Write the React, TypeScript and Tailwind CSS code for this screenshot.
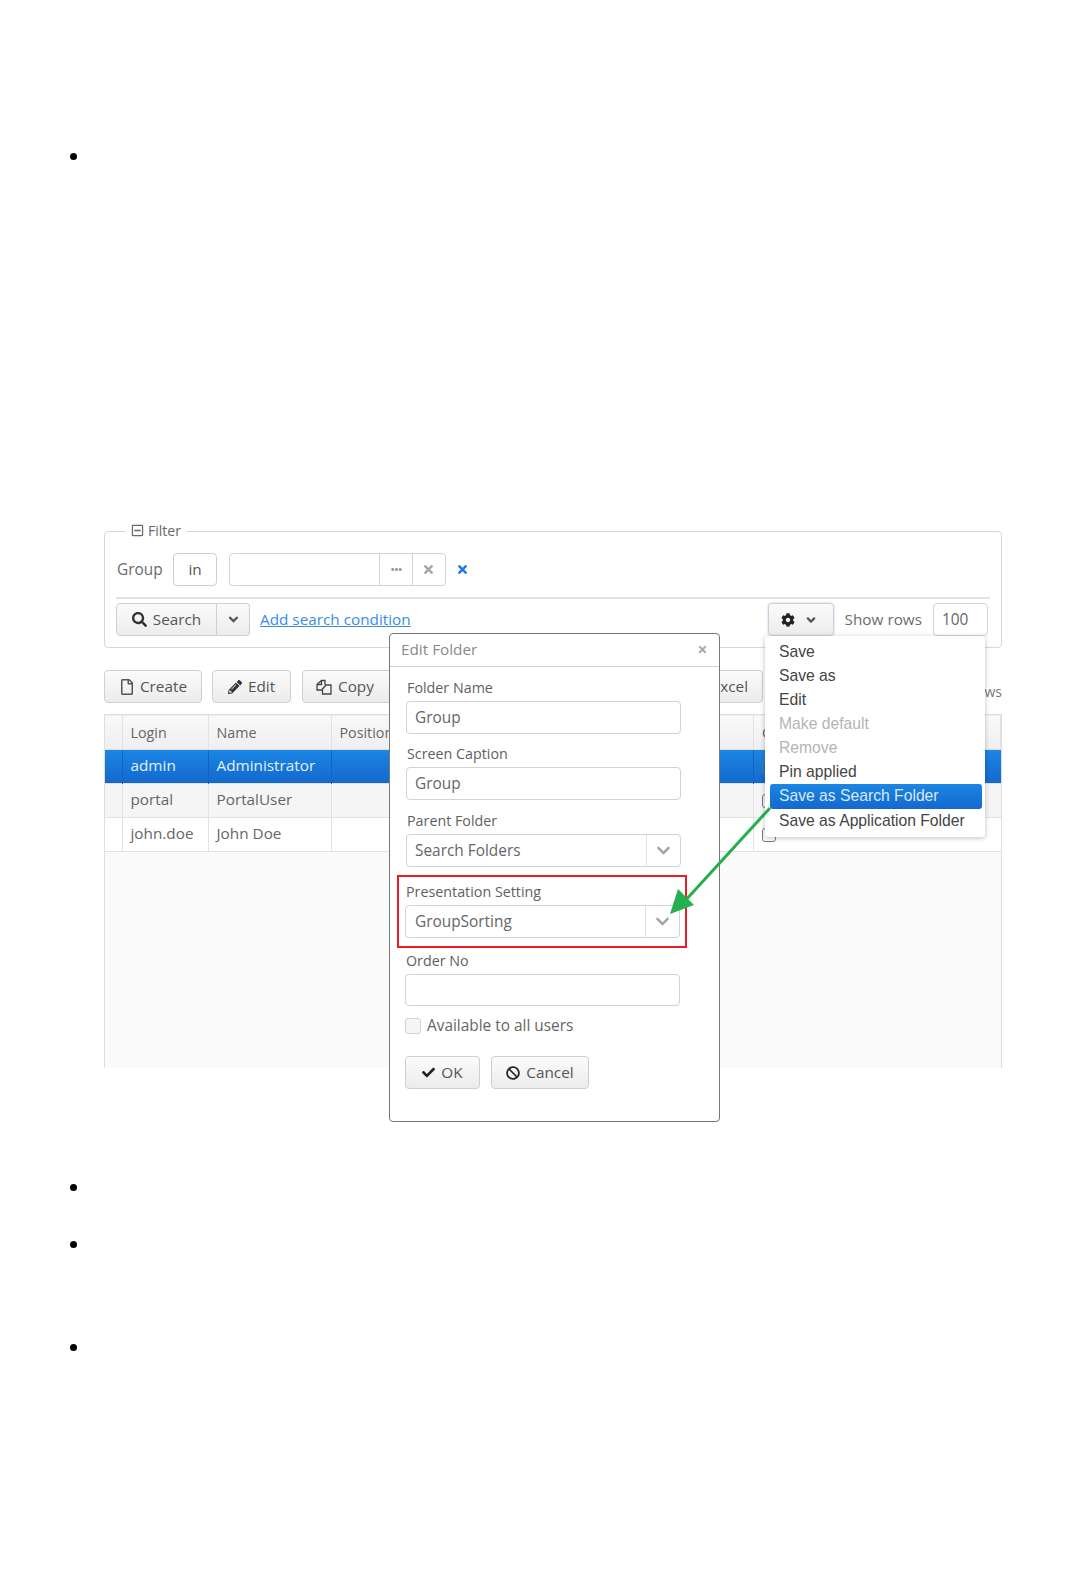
import { FaAngleDown, FaBan, FaCheck, FaChevronDown, FaCog, FaEllipsisH, FaPencilAlt, FaRegFile, FaRegMinusSquare, FaSearch, FaTimes } from "react-icons/fa"
import type { ReactNode } from "react"

const btn =
  "flex h-[33px] items-center justify-center rounded-[4px] border border-[#cfcfcf] bg-gradient-to-b from-[#fbfbfb] to-[#ececec] text-[15.3px] text-[#555]"
const field = "h-[33px] rounded-[4px] border border-[#d2d2d2] bg-white px-[8px] text-[15.4px] leading-[31px] text-[#666]"

function Bullet() {
  return <div className="ml-[70px] h-[7px] w-[7px] rounded-full bg-black" />
}

function Label({ children, className }: { children: ReactNode; className: string }) {
  return <div className={`text-[14.3px] leading-[20px] text-[#5f5f5f] ${className}`}>{children}</div>
}

function SelectField({ value, className }: { value: string; className: string }) {
  return (
    <div className={`${field} flex w-[275px] items-stretch !pr-0 ${className}`}>
      <span className="flex-1">{value}</span>
      <span className="flex w-[34px] items-center justify-center border-l border-[#e2e2e2]">
        <FaChevronDown className="text-[15px] text-[#a3a3a3]" />
      </span>
    </div>
  )
}

function CopyIcon() {
  return (
    <svg width="16" height="16" viewBox="0 0 16 16" fill="none" stroke="#444" strokeWidth="1.3">
      <path d="M6 11H1V5.5L5.5 1.5H9V6" />
      <path d="M1 5.5H5.5V1.5" />
      <path d="M6.5 10L10 6H15V15H6.5Z" />
    </svg>
  )
}

const rows = [
  { login: "admin", name: "Administrator", tr: "bg-gradient-to-b from-[#1b86e3] to-[#1468cf] text-[#e4f0fb]", td: "border-[#1463c2]" },
  { login: "portal", name: "PortalUser", tr: "bg-[#f5f5f5] text-[#666]", td: "border-[#e2e2e2]" },
  { login: "john.doe", name: "John Doe", tr: "bg-white text-[#666]", td: "border-[#e2e2e2]" },
]

const menuItems = [
  { label: "Save", cls: "text-[#444]" },
  { label: "Save as", cls: "text-[#444]" },
  { label: "Edit", cls: "text-[#444]" },
  { label: "Make default", cls: "text-[#b4b4b4]" },
  { label: "Remove", cls: "text-[#b4b4b4]" },
  { label: "Pin applied", cls: "text-[#444]" },
  { label: "Save as Search Folder", cls: "rounded-[3px] bg-gradient-to-b from-[#1b86e3] to-[#1468cf] text-[#d8e9fa]" },
  { label: "Save as Application Folder", cls: "text-[#444]" },
]

export default function App() {
  return (
    <div className="flex min-h-[1569px] flex-col bg-white font-['Open_Sans',sans-serif]">
      <div className="mt-[153px]">
        <Bullet />
      </div>

      {/* Screenshot */}
      <div className="relative mt-[361px] ml-[104px] w-[898px]">
        {/* Filter */}
        <fieldset className="rounded-[4px] border border-[#d8d8d8] px-[11px] pt-[12px] pb-[11px]">
          <legend className="ml-[9px] flex h-[20px] items-center gap-[4px] px-[6px] pb-[2px] text-[14px] text-[#666]">
            <FaRegMinusSquare className="text-[13px]" />
            Filter
          </legend>
          <div className="flex h-[33px] items-center">
            <span className="w-[57px] pl-[1px] text-[15.4px] text-[#6b6b6b]">Group</span>
            <div className={`${btn} w-[44px] !bg-none bg-white pb-[1px]`}>in</div>
            <div className="ml-[12px] flex h-[33px] w-[217px] rounded-[4px] border border-[#d2d2d2]">
              <div className="flex-1" />
              <div className="flex w-[33px] items-center justify-center border-l border-[#d2d2d2]">
                <FaEllipsisH className="text-[11px] text-[#999]" />
              </div>
              <div className="flex w-[33px] items-center justify-center border-l border-[#d2d2d2] pr-[1px]">
                <FaTimes className="text-[13px] text-[#a5a5a5]" />
              </div>
            </div>
            <FaTimes className="ml-[10px] text-[13px] text-[#1a7ae0]" />
          </div>
          <div className="mt-[11px] h-[2px] bg-[#e2e2e2]" />
          <div className="mt-[4px] flex h-[33px] items-center">
            <div className={`${btn} w-[101px] gap-[6px] rounded-r-none`}>
              <FaSearch className="text-[15px] text-[#333]" />
              Search
            </div>
            <div className={`${btn} w-[33px] rounded-l-none border-l-0`}>
              <FaAngleDown className="text-[15px]" />
            </div>
            <span className="ml-[10px] text-[15.3px] text-[#3a8ce6] underline">Add search condition</span>
            <div className={`${btn} ml-auto w-[66px] gap-[9px] border-[#5b9fe0] pr-[2px] shadow-[0_0_2px_#9cc6ef]`}>
              <FaCog className="text-[14px] text-[#222]" />
              <FaAngleDown className="text-[14px]" />
            </div>
            <span className="ml-[11px] text-[15.3px] text-[#6b6b6b]">Show rows</span>
            <div className={`${field} ml-[11px] mr-[2px] w-[55px]`}>100</div>
          </div>
        </fieldset>

        {/* Toolbar */}
        <div className="mt-[22px] flex h-[33px] items-center">
          <div className={`${btn} w-[98px] gap-[5px]`}>
            <FaRegFile className="text-[16px]" />
            Create
          </div>
          <div className={`${btn} ml-[10px] w-[79px] gap-[6px]`}>
            <FaPencilAlt className="text-[14px] text-[#333]" />
            Edit
          </div>
          <div className={`${btn} ml-[11px] w-[94px] justify-start gap-[6px] pl-[13px]`}>
            <CopyIcon />
            Copy
          </div>
          <div className={`${btn} ml-auto mr-[239px] w-[90px] justify-end pr-[14px]`}>Excel</div>
          <span className="absolute right-0 top-[160px] text-[14px] text-[#777]">rows</span>
        </div>

        {/* Table */}
        <div className="mt-[11px] h-[354px] border-x border-[#dedede] bg-[#fafafa]">
          <table className="w-full table-fixed border-collapse text-[15.3px]">
            <colgroup>
              <col className="w-[17px]" />
              <col className="w-[86px]" />
              <col className="w-[123px]" />
              <col />
              <col className="w-[90px]" />
              <col className="w-[247px]" />
            </colgroup>
            <thead>
              <tr className="h-[35px] border-y border-[#dedede] bg-gradient-to-b from-[#f9f9f9] to-[#efefef] text-left text-[14.3px] text-[#666]">
                {["", "Login", "Name", "Position", "Active", "C"].map((h) => (
                  <th key={h} className="border-r border-[#e2e2e2] pt-[2px] pl-[8px] font-normal">
                    {h}
                  </th>
                ))}
              </tr>
            </thead>
            <tbody>
              {rows.map((r) => (
                <tr key={r.login} className={`h-[34px] border-b border-[#e2e2e2] ${r.tr}`}>
                  <td className={`border-r ${r.td}`} />
                  <td className={`border-r pb-[2px] pl-[8px] ${r.td}`}>{r.login}</td>
                  <td className={`border-r pb-[2px] pl-[8px] ${r.td}`}>{r.name}</td>
                  <td className={`border-r ${r.td}`} />
                  <td className={`border-r ${r.td}`} />
                  <td className={`pl-[8px] ${r.td}`}>
                    <div className="h-[14px] w-[14px] rounded-[3px] border border-[#777]" />
                  </td>
                </tr>
              ))}
            </tbody>
          </table>
        </div>

        {/* Edit Folder dialog */}
        <div className="absolute left-[285px] top-[112px] h-[489px] w-[331px] rounded-[4px] border border-[#777] bg-white">
          <div className="flex h-[33px] items-center justify-between border-b border-[#d2d2d2] pb-[1px] pl-[11px] pr-[11px]">
            <span className="text-[15.3px] text-[#8a8a8a]">Edit Folder</span>
            <FaTimes className="text-[11px] text-[#aaa]" />
          </div>
          <div className="pl-[16px]">
            <Label className="mt-[11px] ml-[1px]">Folder Name</Label>
            <div className={`${field} mt-[3px] w-[275px]`}>Group</div>
            <Label className="mt-[10px] ml-[1px]">Screen Caption</Label>
            <div className={`${field} mt-[3px] w-[275px]`}>Group</div>
            <Label className="mt-[11px] ml-[1px]">Parent Folder</Label>
            <SelectField value="Search Folders" className="mt-[3px]" />
            <Label className="mt-[15px]">Presentation Setting</Label>
            <SelectField value="GroupSorting" className="mt-[3px] -ml-[1px] !pl-[9px]" />
            <Label className="mt-[13px]">Order No</Label>
            <div className={`${field} mt-[3px] -ml-[1px] !h-[32px] w-[275px]`} />
            <div className="mt-[12px] -ml-[1px] flex h-[16px] items-center gap-[6px]">
              <div className="h-[16px] w-[16px] rounded-[3px] border border-[#d2d2d2] bg-[#f5f5f5]" />
              <span className="text-[15.4px] text-[#666]">Available to all users</span>
            </div>
            <div className="mt-[22px] -ml-[1px] flex gap-[11px]">
              <div className={`${btn} w-[75px] gap-[6px]`}>
                <FaCheck className="text-[13px] text-[#222]" />
                OK
              </div>
              <div className={`${btn} w-[98px] gap-[6px]`}>
                <FaBan className="text-[14px] text-[#222]" />
                Cancel
              </div>
            </div>
          </div>
        </div>

        {/* Annotation box */}
        <div className="absolute left-[293px] top-[354px] h-[73px] w-[290px] border-2 border-[#ed1c24]" />

        {/* Settings menu */}
        <div className="absolute left-[661px] top-[115px] h-[201px] w-[220px] rounded-[3px] bg-white pt-[3.6px] pl-[5px] font-['Liberation_Sans',sans-serif] shadow-[0_1px_5px_rgba(0,0,0,0.25)]">
          {menuItems.map((m) => (
            <div key={m.label} className={`h-[24.15px] w-[212px] pl-[9px] text-[15.7px] leading-[24px] ${m.cls}`}>
              {m.label}
            </div>
          ))}
        </div>

        {/* Arrow */}
        <svg className="absolute left-[560px] top-[280px]" width="110" height="120" viewBox="0 0 110 120">
          <line x1="106" y1="7" x2="20" y2="101" stroke="#22b14c" strokeWidth="3" />
          <polygon points="6,113 14,88 30,104" fill="#22b14c" />
        </svg>
      </div>

      <div className="mt-[116px]">
        <Bullet />
      </div>
      <div className="mt-[50px]">
        <Bullet />
      </div>
      <div className="mt-[96px]">
        <Bullet />
      </div>
    </div>
  )
}
